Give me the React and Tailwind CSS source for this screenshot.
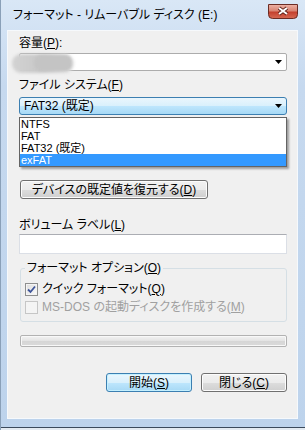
import React from 'react';

const font = "font-['Liberation_Sans','Noto_Sans_CJK_JP',sans-serif] [font-feature-settings:'palt']";

const Arrow = () => (
  <svg width="7" height="4" viewBox="0 0 7 4">
    <path d="M0 0h7L3.5 4z" fill="#000" />
  </svg>
);

const CloseButton = () => (
  <svg width="30" height="15" viewBox="0 0 30 15">
    <defs>
      <linearGradient id="cg" x1="0" y1="0" x2="0" y2="1">
        <stop offset="0" stopColor="#eeb3a6" />
        <stop offset="0.45" stopColor="#d98473" />
        <stop offset="0.55" stopColor="#c4412f" />
        <stop offset="1" stopColor="#d66a54" />
      </linearGradient>
    </defs>
    <path d="M0.5 0.5h29v10a4 4 0 0 1-4 4h-21a4 4 0 0 1-4-4z" fill="url(#cg)" stroke="#6b2c24" />
    <path d="M11 4l8 6M19 4l-8 6" stroke="#5a1e16" strokeWidth="3.6" />
    <path d="M11 4l8 6M19 4l-8 6" stroke="#ffffff" strokeWidth="2" />
  </svg>
);

const Label = ({ children, className = '' }) => (
  <div className={`h-[16px] leading-[16px] text-[12px] text-black ${className}`}>{children}</div>
);

const WinButton = ({ children, className = '', primary = false }) => (
  <div
    className={`h-[19px] rounded-[3px] border flex items-center justify-center text-[12px] text-black ${
      primary
        ? 'border-[#3c7fb1] bg-[linear-gradient(#eaf6fd,#d9f0fc_50%,#bee6fd_51%,#a7d9f5)] shadow-[inset_0_0_0_1px_#c4f0ff]'
        : 'border-[#707070] bg-[linear-gradient(#f2f2f2,#ebebeb_50%,#dddddd_51%,#cfcfcf)] shadow-[inset_0_0_0_1px_#fcfcfc]'
    } ${className}`}
  >
    {children}
  </div>
);

const App = () => {
  const items = ['NTFS', 'FAT', 'FAT32 (既定)', 'exFAT'];

  return (
    <div className={`w-[305px] h-[430px] bg-[linear-gradient(#d9e7f6,#c6d9ef_20%,#bdd3ec)] border-l border-[#8aa0b8] flex flex-col ${font}`}>
      <div className="h-[30px] shrink-0 flex items-start pl-[12px] pr-[7px]">
        <span className="flex-1 mt-[7px] text-[12px] text-black leading-[16px]">フォーマット - リムーバブル ディスク (E:)</span>
        <div className="mt-[4px] shrink-0">
          <CloseButton />
        </div>
      </div>

      <div className="ml-[6px] w-[291px] h-[389px] shrink-0 bg-[#f0f0f0] border border-[#f6f9fc] flex flex-col pl-[11px] pr-[10px] pt-[4px]">
        <Label>
          容量(<u>P</u>):
        </Label>
        <div className="relative mt-[2px] h-[18px] border border-[#acacac] rounded-[2px] bg-white flex items-center justify-end pr-[4px] overflow-visible">
          <div className="absolute left-[-8px] top-[0px] w-[62px] h-[19px] rounded-[9px] bg-[linear-gradient(90deg,#d2d2d2,#c8c8c8_50%,#e2e2e2)] blur-[1.5px]" />
          <div className="absolute left-[14px] top-[1px] w-[38px] h-[16px] rounded-[7px] bg-[#c4c4c4] blur-[1px]" />
          <Arrow />
        </div>

        <Label className="mt-[6px]">
          ファイル システム(<u>F</u>)
        </Label>
        <div className="relative mt-[4px]">
          <div className="h-[18px] border border-[#3c7fb1] rounded-[3px] bg-[linear-gradient(#eaf6fd,#d9f0fc_50%,#bee6fd_51%,#a7d9f5)] flex items-center pl-[4px] pr-[4px] text-[12px]">
            <span className="flex-1">FAT32 (既定)</span>
            <Arrow />
          </div>
          <div className="absolute left-0 right-0 top-[20px] h-[50px] bg-white border border-[#646464] shadow-[2px_2px_2px_rgba(0,0,0,0.35)] flex flex-col z-10">
            {items.map((it, i) => (
              <div
                key={it}
                className={`leading-[12px] pl-[1px] text-[11px] ${
                  i === 3 ? 'bg-[#3399ff] text-white h-[12px]' : 'text-black h-[12px]'
                }`}
              >
                {it}
              </div>
            ))}
          </div>
        </div>

        <WinButton className="mt-[65px] ml-[1px] w-[188px]">
          デバイスの既定値を復元する(<u>D</u>)
        </WinButton>

        <Label className="mt-[18px]">
          ボリューム ラベル(<u>L</u>)
        </Label>
        <div className="mt-[1px] h-[20px] bg-white border border-[#dbdfe6] border-t-[#abadb3]" />

        <fieldset className="mt-[6px] ml-[1px] h-[62px] border border-[#d5dfe5] rounded-[3px] pl-[4px] pb-[4px]">
          <legend className="px-[2px] h-[16px] leading-[16px] text-[12px] text-black">
            フォーマット オプション(<u>O</u>)
          </legend>
          <div className="flex items-center gap-[4px] h-[18px] mt-[4px] text-[12px]">
            <span className="w-[13px] h-[13px] border border-[#8e8f8f] bg-[linear-gradient(135deg,#dcdcdc,#fbfbfb)] shadow-[inset_0_0_0_1px_#f4f4f4] flex items-center justify-center">
              <svg width="9" height="9" viewBox="0 0 9 9">
                <path d="M1 4.5l2.5 2.5L8 1.5" stroke="#3d5499" strokeWidth="1.8" fill="none" />
              </svg>
            </span>
            <span>
              クイック フォーマット(<u>Q</u>)
            </span>
          </div>
          <div className="flex items-center gap-[4px] h-[18px] text-[12px] text-[#a0a0a0]">
            <span className="w-[13px] h-[13px] border border-[#c6c6c6] bg-[#f4f4f4]" />
            <span>
              MS-DOS の起動ディスクを作成する(<u>M</u>)
            </span>
          </div>
        </fieldset>

        <div className="mt-[13px] ml-[1px] h-[12px] rounded-[2px] border border-[#b2b2b2] bg-[linear-gradient(#f3f3f3,#e3e3e3_50%,#d6d6d6_51%,#dadada)] shadow-[inset_0_0_0_1px_#f8f8f8]" />

        <div className="mt-[26px] flex justify-end gap-[9px]">
          <WinButton primary className="w-[86px]">
            開始(<u>S</u>)
          </WinButton>
          <WinButton className="w-[86px]">
            閉じる(<u>C</u>)
          </WinButton>
        </div>
      </div>
      <div className="flex-1" />
      <div className="h-[1px] bg-[#3b4a5c]" />
      <div className="h-[2px] bg-[#e4ebf2]" />
    </div>
  );
};

export default App;
